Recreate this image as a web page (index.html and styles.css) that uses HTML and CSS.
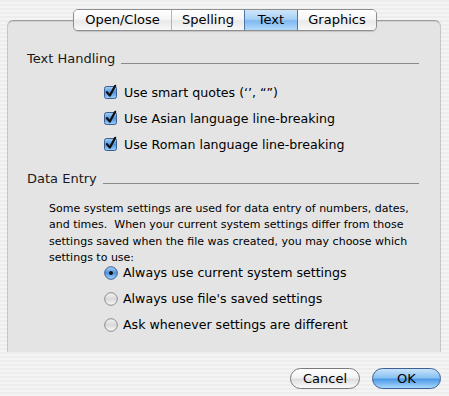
FILE: index.html
```html
<!DOCTYPE html>
<html>
<head>
<meta charset="utf-8">
<link rel="stylesheet" href="styles.css">
</head>
<body>
<div class="window">
  <div class="tabview">
    <div class="tabs">
      <div class="tab first">Open/Close</div>
      <div class="tab">Spelling</div>
      <div class="tab active">Text</div>
      <div class="tab last">Graphics</div>
    </div>

    <div class="group-head">
      <span class="group-title">Text Handling</span>
      <span class="rule"></span>
    </div>
    <div class="checks">
      <label class="opt">
        <svg class="box" width="15" height="15" viewBox="0 0 15 15"><defs><linearGradient id="cb" x1="0" y1="0" x2="0" y2="1"><stop offset="0" stop-color="#a9d0f5"/><stop offset="0.5" stop-color="#4f95e0"/><stop offset="1" stop-color="#9fd0fb"/></linearGradient></defs><rect x="0.5" y="2.5" width="12" height="12" rx="2" fill="url(#cb)" stroke="#3b5f95"/><path d="M3 8.2 L5.8 11.6 L11.2 1.8" fill="none" stroke="#111" stroke-width="2.2" stroke-linecap="round" stroke-linejoin="round"/></svg>
        <span>Use smart quotes (‘’, “”)</span>
      </label>
      <label class="opt">
        <svg class="box" width="15" height="15" viewBox="0 0 15 15"><rect x="0.5" y="2.5" width="12" height="12" rx="2" fill="url(#cb)" stroke="#3b5f95"/><path d="M3 8.2 L5.8 11.6 L11.2 1.8" fill="none" stroke="#111" stroke-width="2.2" stroke-linecap="round" stroke-linejoin="round"/></svg>
        <span>Use Asian language line-breaking</span>
      </label>
      <label class="opt">
        <svg class="box" width="15" height="15" viewBox="0 0 15 15"><rect x="0.5" y="2.5" width="12" height="12" rx="2" fill="url(#cb)" stroke="#3b5f95"/><path d="M3 8.2 L5.8 11.6 L11.2 1.8" fill="none" stroke="#111" stroke-width="2.2" stroke-linecap="round" stroke-linejoin="round"/></svg>
        <span>Use Roman language line-breaking</span>
      </label>
    </div>

    <div class="group-head second">
      <span class="group-title">Data Entry</span>
      <span class="rule"></span>
    </div>
    <p class="desc">Some system settings are used for data entry of numbers, dates, and times.&nbsp; When your current system settings differ from those settings saved when the file was created, you may choose which settings to use:</p>

    <div class="radios">
      <label class="opt radio">
        <svg width="14" height="14" viewBox="0 0 14 14"><defs><linearGradient id="rb" x1="0" y1="0" x2="0" y2="1"><stop offset="0" stop-color="#aed3f6"/><stop offset="0.5" stop-color="#4d93df"/><stop offset="1" stop-color="#a6d6fc"/></linearGradient><linearGradient id="rw" x1="0" y1="0" x2="0" y2="1"><stop offset="0" stop-color="#f4f4f4"/><stop offset="0.5" stop-color="#d9d9d9"/><stop offset="1" stop-color="#fafafa"/></linearGradient></defs><circle cx="7" cy="7" r="6.3" fill="url(#rb)" stroke="#3c5f92"/><circle cx="7" cy="7" r="2" fill="#111"/></svg>
        <span>Always use current system settings</span>
      </label>
      <label class="opt radio">
        <svg width="14" height="14" viewBox="0 0 14 14"><circle cx="7" cy="7" r="6.3" fill="url(#rw)" stroke="#8a8a8a"/></svg>
        <span>Always use file's saved settings</span>
      </label>
      <label class="opt radio">
        <svg width="14" height="14" viewBox="0 0 14 14"><circle cx="7" cy="7" r="6.3" fill="url(#rw)" stroke="#8a8a8a"/></svg>
        <span>Ask whenever settings are different</span>
      </label>
    </div>
  </div>

  <div class="buttons">
    <button class="btn cancel">Cancel</button>
    <button class="btn ok">OK</button>
  </div>
</div>
</body>
</html>
```

FILE: styles.css
```css
html, body {
  margin: 0;
  padding: 0;
}
body {
  width: 449px;
  height: 396px;
  overflow: hidden;
  font-family: "DejaVu Sans", "Liberation Sans", sans-serif;
  color: #000;
  background: repeating-linear-gradient(to bottom, #ededed 0px, #ededed 2px, #f4f4f4 2px, #f4f4f4 4px);
}
.window {
  padding: 20px 8px 0 7px;
}
.tabview {
  position: relative;
  height: 332px;
  box-sizing: border-box;
  background: #e4e4e4;
  border-top: 1px solid #9c9c9c;
  border-left: 1px solid #c6c6c6;
  border-right: 1px solid #c6c6c6;
  border-radius: 6px 6px 0 0;
  box-shadow: inset 0 1px 0 #cfcfcf;
  padding: 30px 21px 0 19px;
}
.tabs {
  position: absolute;
  top: -12px;
  left: 65px;
  display: flex;
  height: 22px;
  box-sizing: border-box;
  border: 1px solid #8e8e8e;
  border-radius: 5px;
  overflow: hidden;
  box-shadow: 0 1px 1px rgba(0,0,0,0.15);
}
.tab {
  height: 20px;
  line-height: 20px;
  font-size: 13px;
  text-align: center;
  background: linear-gradient(to bottom, #ffffff 0%, #f6f6f6 45%, #e9e9e9 55%, #f8f8f8 100%);
  border-left: 1px solid #b4b4b4;
}
.tab.first { width: 97px; border-left: none; }
.tab:nth-child(2) { width: 72px; }
.tab.active {
  width: 52px;
  border-left: 1px solid #5174a8;
  border-right: 1px solid #5174a8;
  background: linear-gradient(to bottom, #cfe6fb 0%, #a8d0f6 45%, #7fb8f0 55%, #b3dcfb 100%);
}
.tab.last { width: 78px; border-left: none; }

.group-head {
  display: flex;
  align-items: flex-end;
  gap: 6px;
  height: 16px;
}
.group-title {
  font-size: 13px;
  color: #1a1a1a;
  line-height: 16px;
}
.rule {
  flex: 1;
  border-bottom: 1px solid #8a8a8a;
  margin-bottom: 3px;
}
.checks {
  display: flex;
  flex-direction: column;
  gap: 9px;
  padding: 17px 0 0 77px;
}
.opt {
  display: flex;
  align-items: center;
  gap: 5px;
  font-size: 12.6px;
  height: 17px;
}
.opt svg { flex: none; }
.box { margin-top: -3px; }
.group-head.second {
  margin-top: 18px;
}
.desc {
  margin: 14px 0 -2px 22px;
  font-size: 11px;
  line-height: 16.3px;
  width: 380px;
}
.radios {
  display: flex;
  flex-direction: column;
  gap: 9px;
  padding: 0 0 0 77px;
}
.radio { gap: 5px; }

.buttons {
  display: flex;
  justify-content: flex-end;
  gap: 12px;
  padding-top: 16px;
}
.btn {
  height: 21px;
  border-radius: 11px;
  font-family: "DejaVu Sans", sans-serif;
  font-size: 13px;
  padding: 0;
  line-height: 19px;
  color: #000;
}
.cancel {
  width: 70px;
  border: 1px solid #7a7a7a;
  background: linear-gradient(to bottom, #ffffff 0%, #f3f3f3 45%, #dedede 55%, #fbfbfb 100%);
}
.ok {
  width: 69px;
  border: 1px solid #3e5f94;
  background: linear-gradient(to bottom, #c8e2fa 0%, #8ac2f2 45%, #4f9ae6 55%, #a8dafd 100%);
}
```
